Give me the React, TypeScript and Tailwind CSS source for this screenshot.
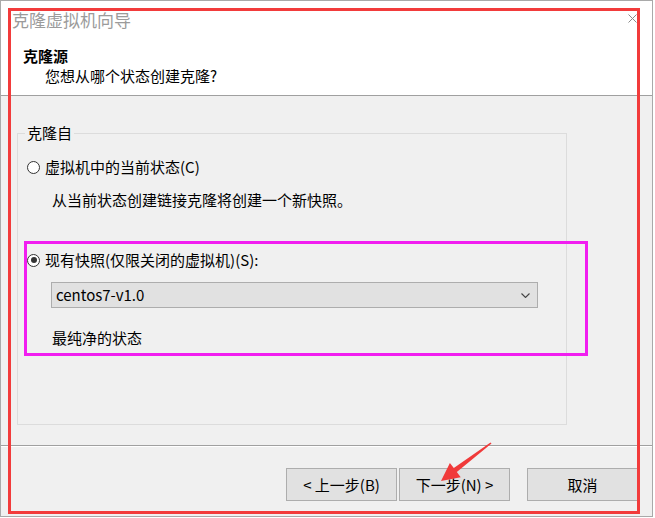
import React from 'react';

const FONT = "font-['Noto_Sans_CJK_SC','Noto_Sans',sans-serif]";

const Radio: React.FC<{ checked?: boolean }> = ({ checked }) => (
  <span className="flex h-[13px] w-[13px] shrink-0 items-center justify-center rounded-full border border-[#333] bg-white">
    {checked && <span className="h-[6px] w-[6px] rounded-full bg-[#333]" />}
  </span>
);

const WizardButton: React.FC<{ label: string }> = ({ label }) => (
  <button className="flex h-[33px] w-[111px] items-center justify-center border border-[#adadad] bg-[#e1e1e1] text-[15px] leading-[20px] text-black">
    {label}
  </button>
);

const App: React.FC = () => {
  return (
    <div className={`relative h-[518px] w-[655px] overflow-hidden bg-white text-black ${FONT}`}>
      {/* Dialog window */}
      <div className="flex h-[517px] w-[653px] flex-col border border-[#a9a9a9] bg-[#f0f0f0]">
        {/* Header */}
        <div className="flex h-[95px] shrink-0 flex-col border-b border-[#a0a0a0] bg-white">
          <div className="flex items-start justify-between pl-[11px] pr-[15px] pt-[9px]">
            <span className="text-[17px] leading-[20px] text-[#9b9b9b]">克隆虚拟机向导</span>
            <svg width="9" height="9" viewBox="0 0 9 9" className="mt-[4px]">
              <path d="M0.5 0.5 L8.5 8.5 M8.5 0.5 L0.5 8.5" stroke="#8a8a8a" strokeWidth="1" />
            </svg>
          </div>
          <div className="ml-[22px] mt-[16px] text-[15px] font-bold leading-[20px]">克隆源</div>
          <div className="ml-[44px] text-[15px] leading-[20px]">您想从哪个状态创建克隆?</div>
        </div>

        {/* Body */}
        <div className="h-[349px] shrink-0 pt-[27px]">
          <fieldset className="ml-[16px] h-[302px] w-[550px] border border-[#dcdcdc]">
            <legend className="ml-[7px] px-[2px] text-[15px] leading-[20px]">克隆自</legend>

            <div className="ml-[9px] mt-[14px] flex h-[20px] items-center gap-[5px]">
              <Radio />
              <span className="text-[15px] leading-[20px]">虚拟机中的当前状态(C)</span>
            </div>
            <div className="ml-[34px] mt-[13px] text-[15px] leading-[20px]">
              从当前状态创建链接克隆将创建一个新快照。
            </div>

            <div className="ml-[9px] mt-[40px] flex h-[20px] items-center gap-[5px]">
              <Radio checked />
              <span className="text-[15px] leading-[20px]">现有快照(仅限关闭的虚拟机)(S):</span>
            </div>
            <div className="ml-[33px] mt-[12px] flex h-[26px] w-[487px] items-center justify-between border border-[#adadad] bg-[#e1e1e1] pl-[4px] pr-[7px]">
              <span className="text-[15px] leading-[20px]">centos7-v1.0</span>
              <svg width="9" height="5" viewBox="0 0 9 5">
                <path d="M0.5 0.5 L4.5 4.5 L8.5 0.5" stroke="#444" strokeWidth="1.1" fill="none" />
              </svg>
            </div>
            <div className="ml-[34px] mt-[20px] text-[15px] leading-[20px]">最纯净的状态</div>
          </fieldset>
        </div>

        {/* Footer */}
        <div className="flex flex-1 items-start justify-end border-t border-[#a0a0a0] pr-[14px] pt-[22px] shadow-[inset_0_1px_0_#ffffff]">
          <div className="flex gap-[2px]">
            <WizardButton label="< 上一步(B)" />
            <WizardButton label="下一步(N) >" />
          </div>
          <div className="ml-[17px]">
            <WizardButton label="取消" />
          </div>
        </div>
      </div>

      {/* Annotations */}
      <div className="pointer-events-none absolute left-[8px] top-[8px] h-[506px] w-[632px] border-[3px] border-[#f23b3b]" />
      <div className="pointer-events-none absolute left-[24px] top-[241px] h-[115px] w-[564px] border-[3px] border-[#f11ef0]" />
      <svg className="pointer-events-none absolute left-0 top-0" width="655" height="518" viewBox="0 0 655 518">
        <polygon
          points="441,481 449.9,462.9 453.8,468.1 490.5,442.5 491.5,443.5 456.8,472.1 460.7,477.3"
          fill="#f03a3a"
        />
      </svg>
    </div>
  );
};

export default App;
